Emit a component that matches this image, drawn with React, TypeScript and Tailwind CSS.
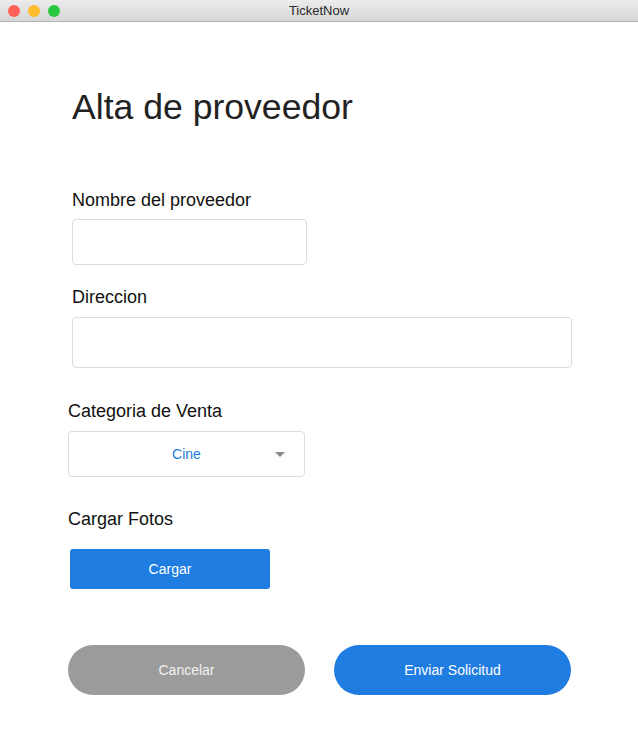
import React from "react";

export default function App() {
  return (
    <div className="w-[638px] h-[754px] bg-white overflow-hidden" style={{ fontFamily: '"Liberation Sans", Arial, sans-serif' }}>
      {/* Title bar */}
      <div className="relative h-[22px] bg-gradient-to-b from-[#ececec] to-[#d6d6d6] border-b border-[#b4b4b4] flex items-center">
        <div className="flex items-center gap-[8px] pl-[8px]">
          <span className="w-[12px] h-[12px] rounded-full bg-[#fe5f57]" />
          <span className="w-[12px] h-[12px] rounded-full bg-[#febc2e]" />
          <span className="w-[12px] h-[12px] rounded-full bg-[#28c840]" />
        </div>
        <div className="absolute inset-0 flex items-center justify-center text-[13px] text-[#2a2a2a] leading-none">
          TicketNow
        </div>
      </div>

      <div className="flex flex-col">
        <h1 className="mt-[67px] ml-[72px] text-[35.6px] leading-[36px] text-[#222222] font-normal">
          Alta de proveedor
        </h1>

        <div className="mt-[66px] ml-[72px] text-[18px] leading-[18px] text-[#111111]">Nombre del proveedor</div>
        <div className="mt-[10px] ml-[72px] w-[235px] h-[46px] border border-[#dcdcdc] rounded-[4px]" />

        <div className="mt-[23px] ml-[72px] text-[18px] leading-[18px] text-[#111111]">Direccion</div>
        <div className="mt-[11px] ml-[72px] w-[500px] h-[51px] border border-[#dcdcdc] rounded-[4px]" />

        <div className="mt-[34px] ml-[68px] text-[18px] leading-[18px] text-[#111111]">Categoria de Venta</div>
        <div className="mt-[11px] ml-[68px] relative w-[237px] h-[46px] border border-[#dcdcdc] rounded-[4px] flex items-center justify-center">
          <span className="text-[14px] leading-[14px] text-[#1e7be0] -mt-[1px]">Cine</span>
          <svg className="absolute right-[19px] top-[20px]" width="10" height="5" viewBox="0 0 10 5">
            <path d="M0 0 L10 0 L5 5 Z" fill="#8a8a8a" />
          </svg>
        </div>

        <div className="mt-[33px] ml-[68px] text-[18px] leading-[18px] text-[#111111]">Cargar Fotos</div>
        <div className="mt-[21px] ml-[70px] w-[200px] h-[40px] bg-[#1f7ce1] rounded-[3px] flex items-center justify-center text-[14px] text-white">
          Cargar
        </div>

        <div className="mt-[56px] ml-[68px] flex gap-[29px]">
          <div className="w-[237px] h-[50px] rounded-full bg-[#9b9b9b] flex items-center justify-center text-[14px] text-[#f2f2f2]">
            Cancelar
          </div>
          <div className="w-[237px] h-[50px] rounded-full bg-[#1f7ce1] flex items-center justify-center text-[14px] text-white">
            Enviar Solicitud
          </div>
        </div>
      </div>
    </div>
  );
}
